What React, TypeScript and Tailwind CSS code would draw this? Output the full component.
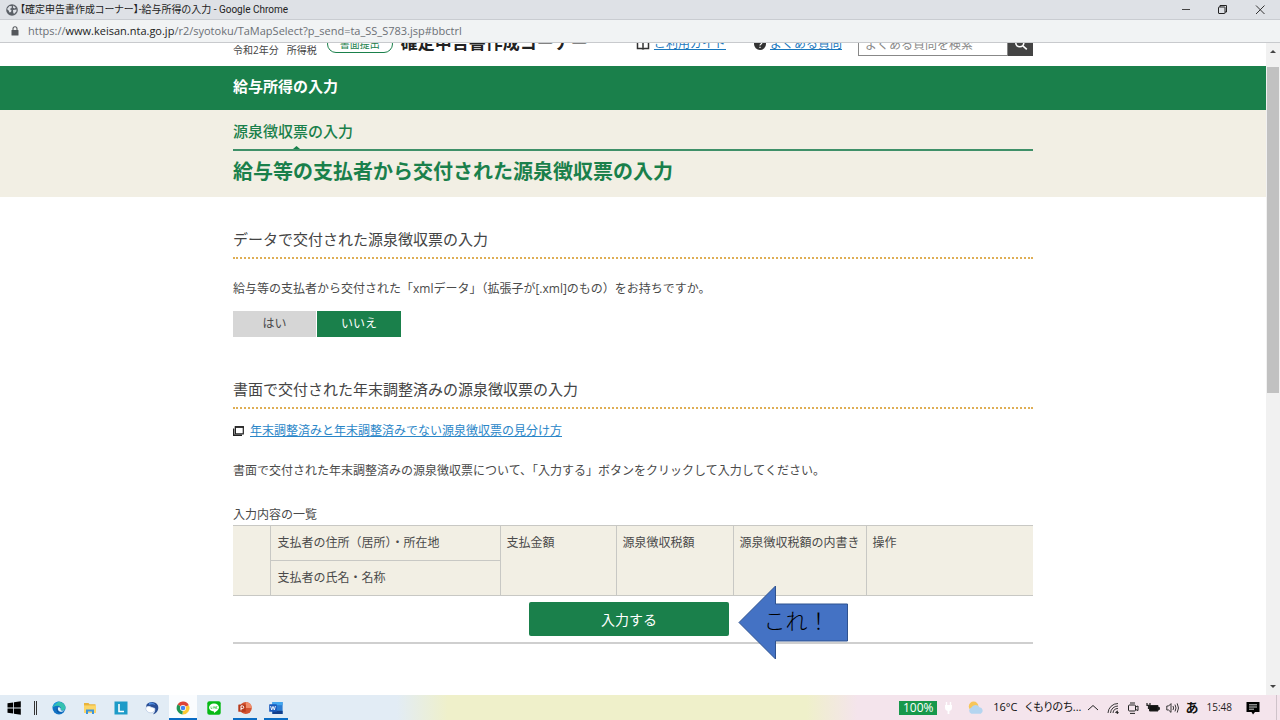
import { useState } from 'react';
import type { ReactNode } from 'react';

const columns = ['支払金額', '源泉徴収税額', '源泉徴収税額の内書き', '操作'];

function GlobeIcon() {
  return (
    <svg className="size-3 shrink-0" viewBox="0 0 12 12">
      <circle cx="6" cy="6" r="5.8" fill="#5a5f66" />
      <path d="M1 5 L3.5 2 L6 2.2 L5.5 4 L3.8 5 L5.5 6.2 L5 8 L3.5 8.5 L2.6 6.6 Z" fill="#dee1e6" />
      <path d="M7.2 1.6 L9.8 3.4 L8.5 4.6 L7 3.8 Z M7 6 L10.6 5.4 L10.4 7.6 L8 10 L7.2 8.4 Z" fill="#dee1e6" />
    </svg>
  );
}

function TitleBar() {
  return (
    <div className="flex h-5 shrink-0 items-center border-b border-[#c9ccd1] bg-[#dee1e6] pl-1.5">
      <GlobeIcon />
      <span className="ml-0.5 whitespace-nowrap font-['Roboto','Noto_Sans_CJK_JP',sans-serif] text-[10px] leading-4 text-[#222] [font-feature-settings:'palt']">
        【確定申告書作成コーナー】-給与所得の入力 - Google Chrome
      </span>
      <div className="ml-auto flex">
        <button type="button" aria-label="最小化" className="flex h-5 w-9 items-center justify-center">
          <svg className="size-3" viewBox="0 0 12 12" stroke="#444" fill="none">
            <path d="M2 5.5 H10" />
          </svg>
        </button>
        <button type="button" aria-label="元に戻す" className="flex h-5 w-9 items-center justify-center">
          <svg className="size-3" viewBox="0 0 12 12" stroke="#222" fill="none">
            <rect x="2.5" y="3" width="6.5" height="6.5" rx="0.5" />
            <path d="M4 3 V1.5 H10.5 V8 H9" />
          </svg>
        </button>
        <button type="button" aria-label="閉じる" className="flex h-5 w-10 items-center justify-center">
          <svg className="size-3" viewBox="0 0 12 12" stroke="#333" fill="none">
            <path d="M2 1.5 L10.5 10 M10.5 1.5 L2 10" />
          </svg>
        </button>
      </div>
    </div>
  );
}

function AddressBar() {
  return (
    <div className="flex h-[23px] shrink-0 items-center border-b border-[#c8cacd] bg-[#f1f3f4] pl-[11px]">
      <svg className="w-2 shrink-0" viewBox="0 0 8 10">
        <rect x="0.5" y="4" width="7" height="5.5" rx="0.6" fill="#55585c" />
        <path d="M2 4.5 V2.8 a2 2 0 0 1 4 0 V4.5" fill="none" stroke="#55585c" strokeWidth="1.1" />
      </svg>
      <span className="ml-[9px] whitespace-nowrap text-[11px] leading-4 text-[#6b6f74]">
        https://<span className="text-[#222]">www.keisan.nta.go.jp</span>
        /r2/syotoku/TaMapSelect?p_send=ta_SS_S783.jsp#bbctrl
      </span>
    </div>
  );
}

// scrolled down a little, so only the lower half of this row stays visible
function SiteHeader() {
  return (
    <header className="h-[23px] overflow-hidden">
      <div className="mx-auto flex h-full max-w-[800px] items-end whitespace-nowrap">
        <span className="mb-2 text-[10px] leading-4 text-[#444]">令和2年分</span>
        <span className="mb-2 ml-2 text-[10px] leading-4 text-[#444]">所得税</span>
        <span className="mb-[13px] ml-2.5 flex h-[18px] w-[66px] items-center justify-center rounded-full border border-[#1a804b] text-[10px] text-[#1a804b]">
          書面提出
        </span>
        <span className="mb-[13px] ml-2 text-[17px] font-bold leading-5 text-[#222]">確定申告書作成コーナー</span>
        <a href="#guide" className="mb-3.5 ml-auto flex items-center text-[12px] leading-4 text-[#1b78bd]">
          <svg className="mr-1 h-3 w-3.5" viewBox="0 0 14 12" fill="none" stroke="#333" strokeWidth="1.5">
            <path d="M1.5 1 H5.5 L7 2 L8.5 1 H12.5 V10.5 H8.5 L7 11 L5.5 10.5 H1.5 Z M7 2 V11" />
          </svg>
          <span className="underline">ご利用ガイド</span>
        </a>
        <a href="#faq" className="mb-3.5 ml-7 flex items-center text-[12px] leading-4 text-[#1b78bd]">
          <svg className="mr-1 size-3" viewBox="0 0 12 12">
            <circle cx="6" cy="6" r="6" fill="#333" />
            <path d="M4.2 4.6 a1.8 1.8 0 1 1 2.6 1.6 Q6 6.6 6 7.6 M6 8.8 V10" fill="none" stroke="#fff" strokeWidth="1.2" />
          </svg>
          <span className="underline">よくある質問</span>
        </a>
        <form className="mb-2.5 ml-4 flex" onSubmit={(e) => e.preventDefault()}>
          <input
            type="text"
            aria-label="よくある質問を検索"
            placeholder="よくある質問を検索"
            className="h-6 w-[150px] border border-[#888] bg-white px-1.5 text-[12px] placeholder:text-[#888]"
          />
          <button type="submit" aria-label="検索" className="flex h-6 w-[25px] items-center justify-center bg-[#444]">
            <svg className="size-3.5" viewBox="0 0 14 14" fill="none" stroke="#fff" strokeWidth="1.6">
              <circle cx="5.8" cy="5.8" r="4" />
              <path d="M8.8 8.8 L12.8 12.4" />
            </svg>
          </button>
        </form>
      </div>
    </header>
  );
}

function SectionHeading({ children }: { children: ReactNode }) {
  return (
    <h2 className="border-b-2 border-dotted border-[#dfae55] pb-1.5 text-[15px] leading-6 text-[#444]">{children}</h2>
  );
}

function DataQuestion() {
  const [hasXml, setHasXml] = useState(false);
  const on = 'bg-[#1a804b] text-white';
  const off = 'bg-[#d6d6d6] text-[#4a4a4a]';

  return (
    <section>
      <SectionHeading>データで交付された源泉徴収票の入力</SectionHeading>
      <p className="mt-5 leading-5">給与等の支払者から交付された「xmlデータ」（拡張子が[.xml]のもの）をお持ちですか。</p>
      <div className="mt-3 flex gap-px">
        <button type="button" onClick={() => setHasXml(true)} className={`h-[26px] w-[83px] ${hasXml ? on : off}`}>
          はい
        </button>
        <button type="button" onClick={() => setHasXml(false)} className={`h-[26px] w-[84px] ${hasXml ? off : on}`}>
          いいえ
        </button>
      </div>
    </section>
  );
}

function PaperSection() {
  return (
    <section className="mt-10">
      <SectionHeading>書面で交付された年末調整済みの源泉徴収票の入力</SectionHeading>
      <a href="#help" className="mt-3 flex items-center leading-5 text-[#2a86c8]">
        <svg className="mr-1.5 h-2.5 w-[11px]" viewBox="0 0 11 10">
          <path d="M0.7 2.4 V9.3 H9" fill="none" stroke="#222" strokeWidth="1.4" />
          <path d="M2.4 0.8 H10.3 V7.8 H2.4 Z" fill="#fff" stroke="#222" strokeWidth="1.2" />
          <path d="M1.8 1 H10.9" stroke="#222" strokeWidth="1.6" />
        </svg>
        <span className="underline">年末調整済みと年末調整済みでない源泉徴収票の見分け方</span>
      </a>
      <p className="mt-5 leading-5">
        書面で交付された年末調整済みの源泉徴収票について、「入力する」ボタンをクリックして入力してください。
      </p>

      <table className="mt-6 w-full table-fixed border-collapse border-y border-[#c8c8c4] bg-[#f2efe4] text-left">
        <caption className="text-left leading-5">入力内容の一覧</caption>
        <colgroup>
          <col className="w-[37px]" />
          <col className="w-[230px]" />
          <col className="w-[116px]" />
          <col className="w-[117px]" />
          <col className="w-[133px]" />
          <col />
        </colgroup>
        <thead className="align-top">
          <tr>
            <td rowSpan={2} className="border-r border-[#c8c8c4]" />
            <th className="h-[35px] border-b border-r border-[#c8c8c4] px-[7px] pt-[7px] font-normal leading-5">
              支払者の住所（居所）・所在地
            </th>
            {columns.map((name) => (
              <th
                key={name}
                rowSpan={2}
                className="whitespace-nowrap border-r border-[#c8c8c4] px-1.5 pt-[7px] font-normal leading-5 last:border-r-0"
              >
                {name}
              </th>
            ))}
          </tr>
          <tr>
            <th className="h-[35px] border-r border-[#c8c8c4] px-[7px] pt-[7px] font-normal leading-5">
              支払者の氏名・名称
            </th>
          </tr>
        </thead>
      </table>

      <div className="flex justify-center border-b-2 border-[#cfcfcf] pb-1.5 pr-2 pt-1.5">
        <div className="relative">
          <button type="button" className="h-[34px] w-[200px] rounded-xs bg-[#1a804b] text-[14px] text-white">
            入力する
          </button>
          <div className="absolute -top-[18px] left-[209px] h-[76px] w-[111px]">
            <svg className="size-full" viewBox="0 0 111 76">
              <path d="M1 38.5 L37.5 2 V20 H109.5 V57 H37.5 V75 Z" fill="#4472c4" stroke="#2f528f" />
            </svg>
            <span className="absolute inset-0 flex items-center justify-center whitespace-nowrap pb-1 pl-1.5 text-[22px] font-light text-black">
              これ！
            </span>
          </div>
        </div>
      </div>
    </section>
  );
}

function ScrollBar() {
  return (
    <div className="flex w-3.5 shrink-0 flex-col items-center bg-[#f1f1f1]">
      <svg className="h-4 w-2.5 shrink-0" viewBox="0 0 10 16">
        <path d="M2 10 L5 7 L8 10 Z" fill="#444" />
      </svg>
      <div className="mt-2 h-1/2 w-3 bg-[#c1c1c1]" />
      <svg className="mt-auto h-4 w-2.5 shrink-0" viewBox="0 0 10 16">
        <path d="M2 6 L5 9 L8 6 Z" fill="#444" />
      </svg>
    </div>
  );
}

function TaskItem({ label, state, children }: { label: string; state?: 'active' | 'open'; children: ReactNode }) {
  return (
    <button type="button" aria-label={label} className="flex h-full w-[31px] justify-center">
      <span
        className={`flex h-full items-center justify-center border-b-2 pt-0.5 ${
          state === 'active'
            ? 'w-7 border-[#0a6cc4] bg-[#fafcfe]'
            : state === 'open'
              ? 'w-6 border-[#0a6cc4]'
              : 'w-6 border-transparent'
        }`}
      >
        <svg className="size-3.5" viewBox="0 0 14 14">
          {children}
        </svg>
      </span>
    </button>
  );
}

function TrayIcon({ label, children }: { label: string; children: ReactNode }) {
  return (
    <button type="button" aria-label={label} className="flex w-5 justify-center">
      <svg className="size-3.5" viewBox="0 0 14 14" fill="none" stroke="#222">
        {children}
      </svg>
    </button>
  );
}

function TaskBar() {
  return (
    <footer className="flex h-[25px] shrink-0 items-center bg-[linear-gradient(to_right,#e2ecf5_31%,#eff0ca_35%,#eff0ca_63%,#f4e4ec_67%)]">
      <button type="button" aria-label="スタート" className="ml-[7px]">
        <svg className="size-3.5" viewBox="0 0 14 14">
          <path d="M0.5 2.2 L6.2 1.4 V6.6 H0.5 Z M7 1.3 L13.8 0.3 V6.6 H7 Z M0.5 7.4 H6.2 V12.6 L0.5 11.8 Z M7 7.4 H13.8 V13.7 L7 12.7 Z" fill="#000" />
        </svg>
      </button>
      <div className="ml-[13px] mr-1.5 h-3.5 w-[3px] border-x border-[#333]" />

      <div className="flex h-full">
        <TaskItem label="Edge">
          <circle cx="7" cy="7" r="6.5" fill="#1272c4" />
          <path d="M0.6 6.5 A6.5 6.5 0 0 1 13.5 6.6 C13.6 9.6 10 10 8.6 9 C9.8 7.4 8.4 4.6 5.4 4.7 C3 4.8 1 6 0.6 6.5 Z" fill="#35c1b0" />
          <path d="M0.6 6.5 A6.5 6.5 0 0 1 7 0.5 C5 2 2 4 0.6 6.5 Z" fill="#1b9de2" />
          <path d="M6.2 6.4 C4.4 8.8 6.4 12.2 10.6 11.2 C7.6 13 4.2 10.8 4.6 8.4 C4.8 7.2 5.6 6.6 6.2 6.4 Z" fill="#0c4f9c" />
          <path d="M6.2 6.4 C5 8.6 7 11 10 10.8 L13.4 9 C11.4 10 9.2 9.8 8.6 9 C9.4 7.6 7.8 5.8 6.2 6.4 Z" fill="#e4f1fa" />
        </TaskItem>
        <TaskItem label="エクスプローラー">
          <path d="M1 2 H5.5 L6.5 3.2 H12.5 V12 H1 Z" fill="#e9b43c" />
          <rect x="1" y="4.4" width="12" height="7.6" fill="#fcd667" />
          <path d="M3 13 V8.6 H11 V13 H9 V10.6 H5 V13 Z" fill="#3f95d8" />
        </TaskItem>
        <TaskItem label="L">
          <rect x="0.5" y="0.5" width="13" height="13" fill="#1d9bc8" />
          <path d="M5 3 V10.5 H10" fill="none" stroke="#fff" strokeWidth="1.6" />
        </TaskItem>
        <TaskItem label="Thunderbird">
          <path d="M1.6 3.6 C4 0 10.6 0 12.8 4.2 C14.4 8 12 12.6 8 13.2 C10 11.4 10.6 9.4 10 7.4 L5.4 5.4 C4 4.6 2.4 4.8 1 6 Z" fill="#2a4f96" />
          <path d="M0.8 7 C2 5 4.4 5 6 6.2 L9.8 7.2 C10.2 10 8 12.2 5 11.8 C2.4 11.4 0.6 9.2 0.8 7 Z" fill="#fff" stroke="#9fb4d8" strokeWidth="0.5" />
          <path d="M4 2 C6.4 1 9.4 2 10.4 4.2 C8.4 3 6.4 3 4 4 Z" fill="#4d8be0" />
        </TaskItem>
        <TaskItem label="Chrome" state="active">
          <path d="M7 7 L1.6 3.6 A6.4 6.4 0 0 1 12.8 4.2 Z" fill="#dd4437" />
          <path d="M7 7 L12.8 4.2 A6.4 6.4 0 0 1 6.4 13.4 Z" fill="#fcc934" />
          <path d="M7 7 L6.4 13.4 A6.4 6.4 0 0 1 1.6 3.6 Z" fill="#219653" />
          <circle cx="7" cy="7" r="3" fill="#fff" />
          <circle cx="7" cy="7" r="2.3" fill="#4285f4" />
        </TaskItem>
        <TaskItem label="LINE">
          <rect x="0.3" y="0.3" width="13.4" height="13.4" rx="2" fill="#06b915" />
          <path d="M7 2.6 C10 2.6 12 4.4 12 6.6 C12 8.8 9.4 10.4 7 12 V10.4 C4 10.4 2 8.8 2 6.6 C2 4.4 4 2.6 7 2.6 Z" fill="#fff" />
          <path d="M4 5.5 V7.5 H5.2 M6.2 5.5 V7.5 M7.2 7.5 V5.5 L8.6 7.5 V5.5 M10.4 5.5 H9.5 V7.5 H10.4" fill="none" stroke="#06b915" strokeWidth="0.5" />
        </TaskItem>
        <TaskItem label="PowerPoint" state="open">
          <circle cx="7.8" cy="7" r="6" fill="#d35230" />
          <path d="M7.8 1 A6 6 0 0 1 13.8 7 H7.8 Z" fill="#f08e6b" />
          <rect x="0.3" y="3.4" width="7.4" height="7.4" rx="0.6" fill="#b83a1b" />
          <path d="M3 9.4 V4.9 H4.4 a1.3 1.3 0 0 1 0 2.7 H3" fill="none" stroke="#fff" strokeWidth="1" />
        </TaskItem>
        <TaskItem label="Word" state="open">
          <rect x="3.4" y="1" width="10.2" height="12" rx="0.6" fill="#2b7cd3" />
          <rect x="3.4" y="1" width="10.2" height="3.2" fill="#41a5ee" />
          <rect x="3.4" y="9.8" width="10.2" height="3.2" fill="#123f8c" />
          <rect x="0.2" y="3.2" width="7.6" height="7.6" rx="0.6" fill="#185abd" />
          <path d="M1.6 5 L2.7 9 L4 5.4 L5.3 9 L6.4 5" fill="none" stroke="#fff" strokeWidth="0.9" />
        </TaskItem>
      </div>

      <div className="ml-auto flex items-center whitespace-nowrap pr-[3px]">
        <span className="flex h-3.5 w-[38px] items-center justify-center bg-[#17984b] text-[12px] text-white">100%</span>
        <svg className="ml-1 h-3.5 w-4" viewBox="0 0 16 14">
          <path d="M5.5 1 V4 M9.5 1 V4" stroke="#fff" strokeWidth="1.4" />
          <path d="M4 4 H11 V7 Q11 9.5 8.4 10 V13 H6.6 V10 Q4 9.5 4 7 Z" fill="#fff" />
        </svg>
        <svg className="ml-2.5 h-3.5 w-[18px]" viewBox="0 0 18 14">
          <circle cx="6.6" cy="5.4" r="4.8" fill="#f7c65a" />
          <path d="M4.4 12.8 a3.4 3.4 0 0 1 0 -6.4 a4.6 4.6 0 0 1 8 -0.2 a3.5 3.5 0 0 1 1.4 6.6 Z" fill="#b4d5f0" />
        </svg>
        <span className="ml-2 text-[11px] text-[#111]">16°C</span>
        <span className="ml-2 text-[11px] text-[#111] [font-feature-settings:'palt']">くもりのち...</span>
        <div className="ml-0.5 flex">
          <TrayIcon label="隠れているインジケーター">
            <path d="M2 9 L7 4.5 L12 9" />
          </TrayIcon>
          <TrayIcon label="Wi-Fi">
            <path d="M2 12 A10 10 0 0 1 12 2.5 M4.5 12 A7.5 7.5 0 0 1 12 5 M7 12 A5 5 0 0 1 12 7.5 M9.5 12 A2.5 2.5 0 0 1 12 10" strokeWidth="0.9" />
            <circle cx="11.4" cy="11.6" r="0.8" fill="#222" />
          </TrayIcon>
          <TrayIcon label="会議">
            <rect x="2.5" y="4" width="7" height="6" rx="1" />
            <path d="M9.5 6 L12 5 V9.5 L9.5 8.5 M4 2 H9 M4 12.4 H9" />
          </TrayIcon>
          <TrayIcon label="バッテリー">
            <path d="M3.5 4.5 H12 V10 H3.5 Z M12 6.5 H13.4 V8.5 H12 Z" fill="#111" />
            <path d="M1 2 V5 M4 2 V5 M0.5 4.4 H4.5 M2.5 5 V8" strokeWidth="1.2" />
          </TrayIcon>
          <TrayIcon label="音量">
            <path d="M0.8 5 H2.6 L5 2.6 V11.4 L2.6 9 H0.8 Z M7 5 Q8.2 7 7 9 M9 3.6 Q11 7 9 10.4 M11.2 2.4 Q13.8 7 11.2 11.6" strokeWidth="0.9" />
          </TrayIcon>
        </div>
        <span className="ml-0.5 text-[13px] font-bold text-[#111]">あ</span>
        <span className="ml-2 text-[10px] text-[#222]">15:48</span>
        <button type="button" aria-label="通知" className="ml-3.5">
          <svg className="size-3.5" viewBox="0 0 14 14">
            <path d="M0.5 1 H13.5 V11 H9 L7 13.4 L5.5 11 H0.5 Z" fill="#000" />
            <path d="M3 3.8 H11 M3 6 H11 M3 8.2 H8" stroke="#fff" strokeWidth="0.8" />
          </svg>
        </button>
        <div className="ml-4 h-[25px] w-px bg-[#cfc3ca]" />
      </div>
    </footer>
  );
}

export default function App() {
  return (
    <div className="flex h-screen flex-col overflow-hidden bg-white font-['Open_Sans','Noto_Sans_CJK_JP',sans-serif] text-[12px] text-[#4a4a4a]">
      <TitleBar />
      <AddressBar />

      <div className="flex min-h-0 flex-1">
        <div className="min-w-0 flex-1 overflow-hidden">
          <SiteHeader />
          <div className="bg-[#1a804b]">
            <p className="mx-auto max-w-[800px] pb-3 pt-2 text-[15px] font-bold leading-6 text-white">給与所得の入力</p>
          </div>
          <div className="bg-[#f2efe4] text-[#1a804b]">
            <div className="mx-auto max-w-[800px]">
              <div className="border-b-2 border-[#3f9068] pt-1.5">
                <p className="text-[15px] font-medium leading-[30px]">源泉徴収票の入力</p>
                <svg className="ml-[60px] h-[3px] w-[7px]" viewBox="0 0 7 3">
                  <path d="M0 3 L3.5 0 L7 3 Z" fill="#1a804b" />
                </svg>
              </div>
              <h1 className="pb-1 text-[20px] font-bold leading-[42px]">給与等の支払者から交付された源泉徴収票の入力</h1>
            </div>
          </div>
          <main className="mx-auto max-w-[800px] pt-[30px]">
            <DataQuestion />
            <PaperSection />
          </main>
        </div>
        <ScrollBar />
      </div>

      <TaskBar />
    </div>
  );
}
